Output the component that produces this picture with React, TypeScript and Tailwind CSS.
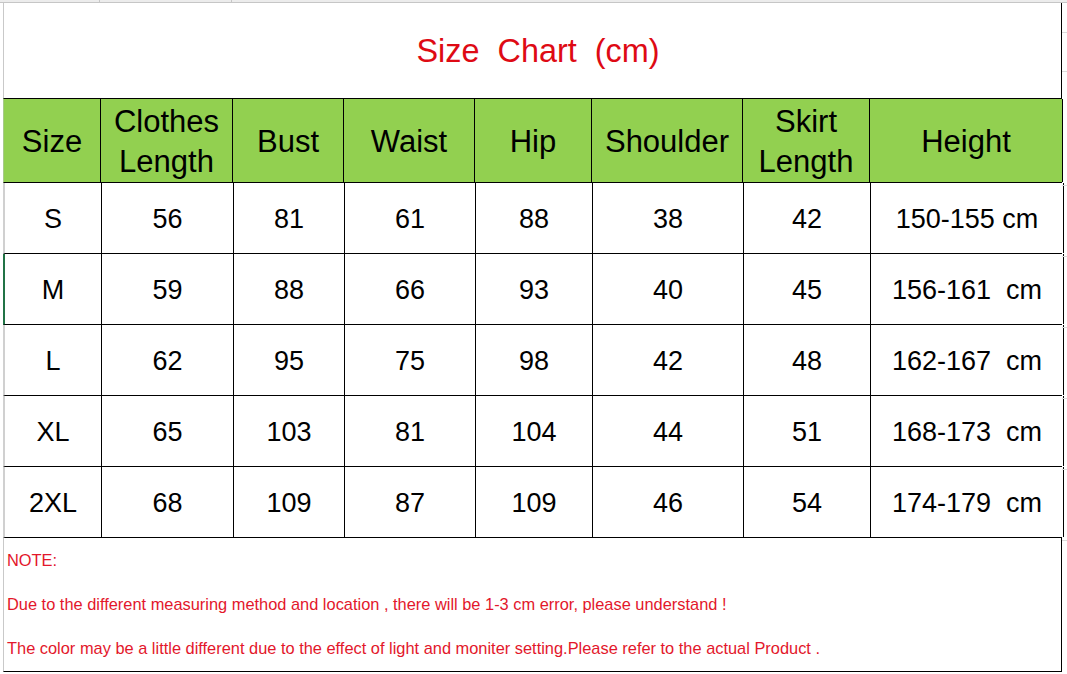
import React from 'react';

const cols = ['w-[97px]', 'w-[132px]', 'w-[111px]', 'w-[131px]', 'w-[117px]', 'w-[151px]', 'w-[127px]', 'w-[193px]'];

const headers = [['Size'], ['Clothes', 'Length'], ['Bust'], ['Waist'], ['Hip'], ['Shoulder'], ['Skirt', 'Length'], ['Height']];

const rows = [
  ['S', '56', '81', '61', '88', '38', '42', '150-155 cm'],
  ['M', '59', '88', '66', '93', '40', '45', '156-161  cm'],
  ['L', '62', '95', '75', '98', '42', '48', '162-167  cm'],
  ['XL', '65', '103', '81', '104', '44', '51', '168-173  cm'],
  ['2XL', '68', '109', '87', '109', '46', '54', '174-179  cm'],
];

export default function App() {
  return (
    <div className="w-[1067px] h-[674px] bg-white overflow-hidden flex flex-col text-black" style={{ fontFamily: '"Liberation Sans", Arial, sans-serif' }}>
      {/* sheet gridline strip */}
      <div className="h-[3px] shrink-0 bg-[#ececec] border-b border-[#c6c6c6] flex">
        <div className="w-[100px] border-r border-[#c6c6c6]" />
        <div className="w-[132px] border-r border-[#c6c6c6]" />
      </div>

      <div className="flex">
        <div className="w-[3px] shrink-0" />
        <div className="w-[1059px] shrink-0 flex flex-col">
          {/* title */}
          <div className="h-[95px] border-l border-[#c9c9c9] border-r border-r-black flex items-center justify-center pl-[11px]">
            <span className="text-[32.4px] text-[#de0a14] whitespace-pre leading-none pt-[2px]">Size  Chart  (cm)</span>
          </div>

          {/* header */}
          <div className="flex h-[85px] bg-[#92d050] border-t border-black border-b border-b-black border-l border-l-[#a8c98a]">
            {headers.map((h, i) => (
              <div key={i} className={`${cols[i]} ${i === 0 ? 'w-[96px]' : ''} shrink-0 border-r border-black flex flex-col items-center justify-center pt-[3px] text-[31px] leading-[40px]`}>
                {h.map((line) => (
                  <span key={line}>{line}</span>
                ))}
              </div>
            ))}
          </div>

          {/* data rows */}
          {rows.map((r, ri) => (
            <div key={ri} className={`flex h-[71px] border-b border-black border-l-2 ${ri === 1 ? 'border-l-[#217346]' : 'border-l-[#d0d0d0]'}`}>
              {r.map((c, ci) => (
                <div key={ci} className={`${cols[ci]} ${ci === 0 ? 'w-[95px]' : ''} shrink-0 border-r border-black flex items-center justify-center pt-[2px] text-[27px] whitespace-pre`}>
                  {c}
                </div>
              ))}
            </div>
          ))}

          {/* notes */}
          <div className="h-[134px] border-l border-[#c9c9c9] border-r border-r-black border-b border-b-black pl-[3px] pt-[13px] text-[16.4px] text-[#e3172b] flex flex-col gap-[25px] leading-[19px]">
            <div>NOTE:</div>
            <div>Due to the different measuring method and location , there will be 1-3 cm error, please understand !</div>
            <div>The color may be a little different due to the effect of light and moniter setting.Please refer to the actual Product .</div>
          </div>
        </div>

        {/* right gutter gridlines */}
        <div className="flex-1 flex flex-col">
          <div className="h-[30px] border-b border-[#dcdcdc]" />
          <div className="h-[39px] border-b border-[#dcdcdc]" />
          <div className="h-[114px] border-b border-[#dcdcdc]" />
          <div className="h-[71px] border-b border-[#dcdcdc]" />
          <div className="h-[71px] border-b border-[#dcdcdc]" />
          <div className="h-[71px] border-b border-[#dcdcdc]" />
          <div className="h-[71px] border-b border-[#dcdcdc]" />
          <div className="h-[71px] border-b border-[#dcdcdc]" />
        </div>
      </div>
    </div>
  );
}
